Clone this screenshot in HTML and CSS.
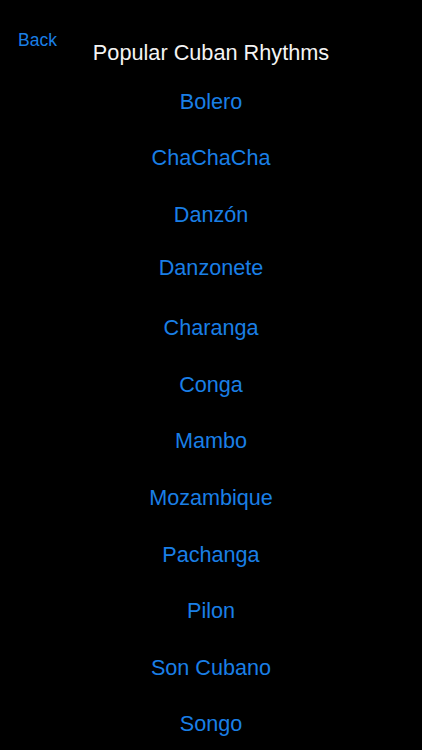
FILE: index.html
```html
<!DOCTYPE html>
<html lang="en">
<head>
    <meta charset="UTF-8">
    <meta name="viewport" content="width=device-width, initial-scale=1.0">
    <title>Popular Cuban Rhythms</title>
    <link rel="stylesheet" href="styles.css">
</head>
<body>
    <div class="header">
        <a class="back">Back</a>
        <h1 class="title">Popular Cuban Rhythms</h1>
    </div>

    <ul class="list">
        <li><a>Bolero</a></li>
        <li><a>ChaChaCha</a></li>
        <li><a>Danzón</a></li>
        <li class="raised"><a>Danzonete</a></li>
        <li><a>Charanga</a></li>
        <li><a>Conga</a></li>
        <li><a>Mambo</a></li>
        <li><a>Mozambique</a></li>
        <li><a>Pachanga</a></li>
        <li><a>Pilon</a></li>
        <li><a>Son Cubano</a></li>
        <li><a>Songo</a></li>
    </ul>
</body>
</html>
```

FILE: styles.css
```css
html,body{
    margin:0;
    padding:0;
    background-color:#000;
}
body{
    font-family:"Liberation Sans", Arial, sans-serif;
    height:750px;
    overflow:hidden;
}

.header{
    display:grid;
    grid-template-columns:1fr auto 1fr;
    align-items:start;
    padding-top:30px;
}
.back{
    grid-column:1;
    justify-self:start;
    margin-left:18px;
    font-size:17.5px;
    line-height:20px;
    color:#1a7fe6;
}
.title{
    grid-column:2;
    margin:9.5px 0 0;
    font-size:21.7px;
    line-height:26px;
    font-weight:normal;
    color:#f4f4f4;
    white-space:nowrap;
}

.list{
    list-style:none;
    margin:8px 0 0;
    padding:0;
}
.list li{
    box-sizing:border-box;
    height:56.6px;
    display:flex;
    align-items:center;
    justify-content:center;
    font-size:21.6px;
    line-height:26px;
    color:#1a7fe6;
}
.list li.raised{padding-bottom:7px;}
```
